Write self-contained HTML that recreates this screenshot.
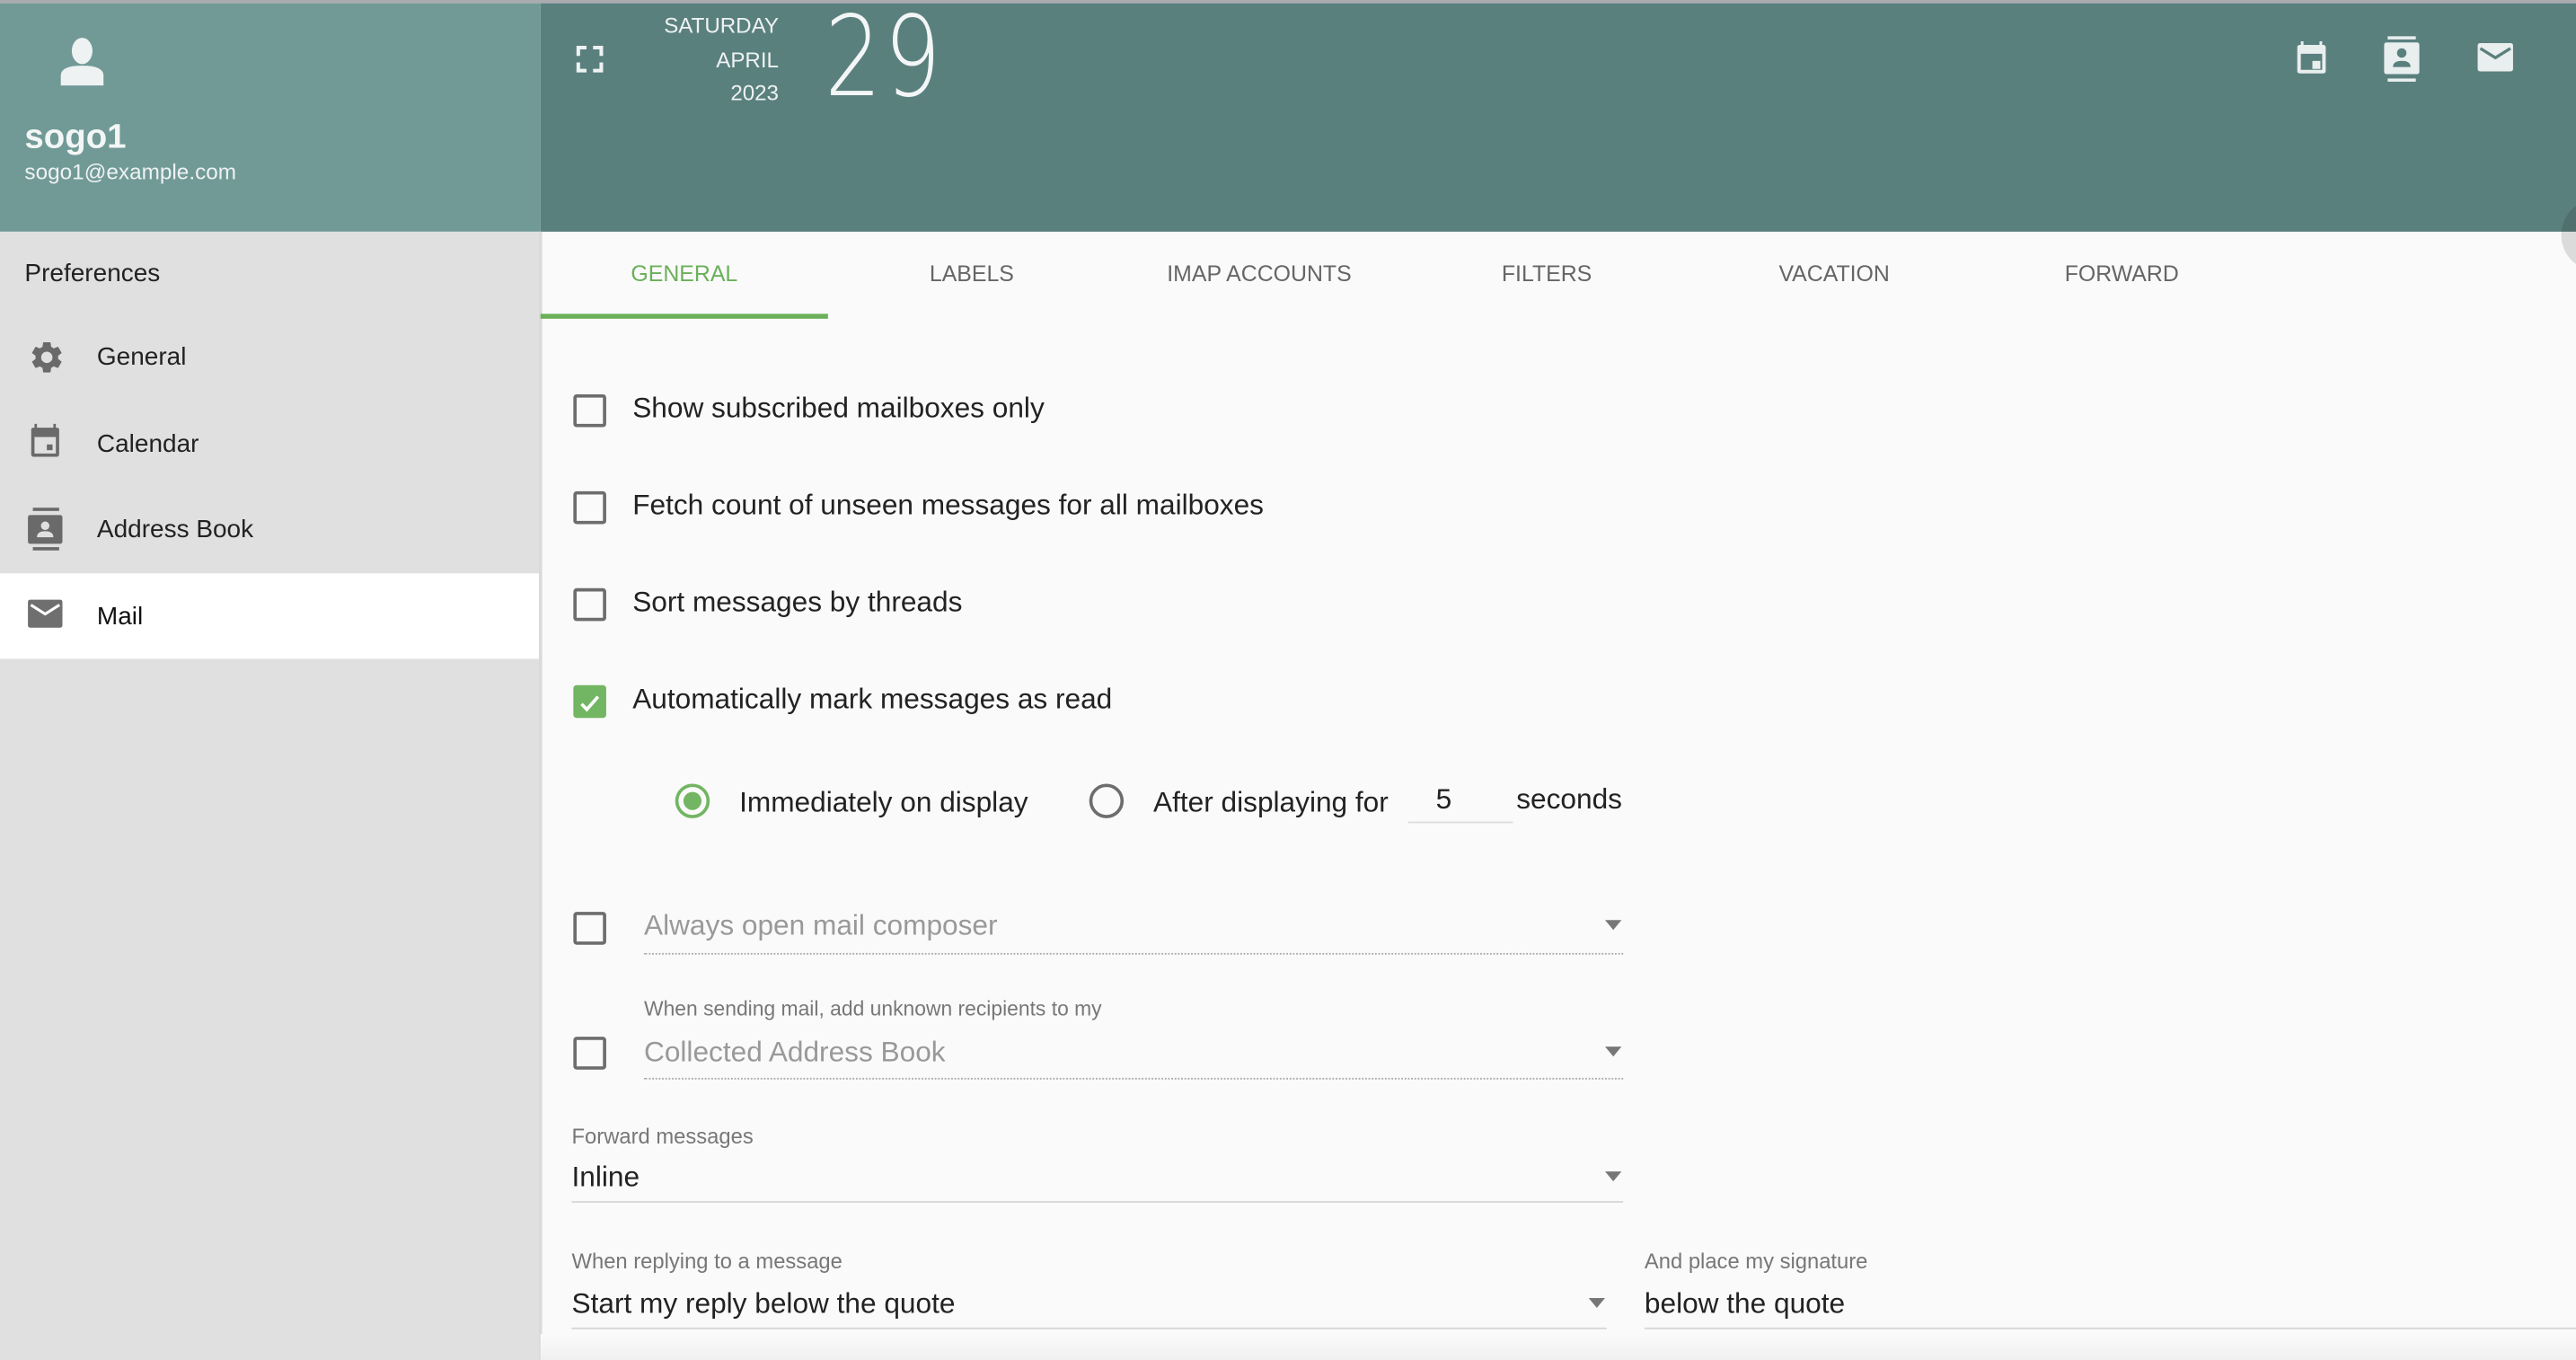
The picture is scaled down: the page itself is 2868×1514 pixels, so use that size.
<!DOCTYPE html>
<html><head><meta charset="utf-8"><style>
html,body{margin:0;padding:0;width:2868px;height:1514px;overflow:hidden;background:#fafafa}
#w{position:absolute;left:0;top:0;width:1568px;height:828px;transform:scale(1.829082);transform-origin:0 0;font-family:"Liberation Sans",sans-serif;overflow:hidden;background:#fafafa}
.a{position:absolute;white-space:nowrap}
.cb{position:absolute;width:16px;height:16px;border:2px solid #6d6d6d;border-radius:2px;left:349px}
.lbl{font-size:17.3px;color:#222}
.sm{font-size:13px;color:#777}
.tab{position:absolute;top:141px;width:175px;height:52px;line-height:52px;text-align:center;font-size:13.6px;color:#666}
.arrow{position:absolute;width:0;height:0;border-left:5.5px solid transparent;border-right:5.5px solid transparent;border-top:6px solid #777}
</style></head><body><div id="w">
<div class="a" style="left:0;top:0;width:1568px;height:1.5px;background:#a9abae"></div>
<div class="a" style="left:0;top:1.5px;width:329px;height:139.5px;background:#719a97"></div>
<div class="a" style="left:329px;top:1.5px;width:1239px;height:139.5px;background:#5a807e"></div>
<div class="a" style="left:0;top:141px;width:329px;height:687px;background:#e0e0e0"></div>
<div class="a" style="left:328px;top:141px;width:2px;height:687px;background:#dadada"></div>
<div class="a" style="left:1559px;top:121px;width:44px;height:44px;border-radius:50%;background:rgba(0,0,0,0.12)"></div>
<svg class="a" style="left:34px;top:20px" width="32" height="32" viewBox="0 0 32 32"><ellipse cx="16" cy="11" rx="6.3" ry="8" fill="#eef2f2"/><path d="M3 33 V26 Q3 20 16 20 Q29 20 29 26 V33Z" fill="#eef2f2"/></svg>
<div class="a" style="left:15px;top:72px;font-size:21px;font-weight:bold;color:#f3f6f6">sogo1</div>
<div class="a" style="left:15px;top:97px;font-size:13.3px;color:#eef2f2">sogo1@example.com</div>
<svg class="a" style="left:350px;top:27px" width="18" height="18" viewBox="0 0 18 18" fill="none" stroke="#eef2f2" stroke-width="2.2"><path d="M2 7V2H7M11 2H16V7M16 11V16H11M7 16H2V11"/></svg>
<div class="a" style="left:380px;top:6px;width:94px;text-align:right;font-size:13.2px;line-height:20.5px;color:#eef2f2">SATURDAY<br>APRIL<br>2023</div>
<div class="a" style="left:502px;top:-4px;font-size:68px;color:#f3f6f6;letter-spacing:2px;font-family:'DejaVu Sans','Liberation Sans',sans-serif;transform:scaleX(0.8);transform-origin:0 0;font-weight:200">29</div>
<svg class="a" style="left:1394px;top:23px" width="26" height="26" viewBox="0 0 24 24" fill="#e9eeee"><path d="M6 2h1.5v3H6zM16.5 2H18v3h-1.5zM4 5.5Q4 4 5.5 4h13Q20 4 20 5.5v13Q20 20 18.5 20h-13Q4 20 4 18.5zM6 9v9h12V9z"/><rect x="12.5" y="13" width="4.5" height="4.5"/></svg>
<svg class="a" style="left:1449px;top:21px" width="28" height="30" viewBox="0 0 26 28" fill="#e9eeee"><rect x="4" y="1" width="16" height="1.8"/><rect x="4" y="25" width="16" height="1.8"/><path d="M2 6Q2 4.5 3.5 4.5h17Q22 4.5 22 6v15Q22 22.5 20.5 22.5h-17Q2 22.5 2 21z"/><circle cx="12" cy="10.5" r="2.7" fill="#5a807e"/><path d="M7 18.5q0-3.5 5-3.5t5 3.5z" fill="#5a807e"/></svg>
<svg class="a" style="left:1506px;top:24px" width="28" height="26" viewBox="0 0 26 24" fill="#e9eeee"><path d="M2 3.5Q2 2 3.5 2h17Q22 2 22 3.5v13Q22 18 20.5 18h-17Q2 18 2 16.5z"/><path d="M3.5 5l8.5 5.3 8.5-5.3" stroke="#5a807e" stroke-width="1.7" fill="none"/></svg>
<div class="a" style="left:15px;top:158px;font-size:15.3px;color:#222">Preferences</div>
<div class="a" style="left:0;top:349px;width:328px;height:52px;background:#fff"></div>
<svg class="a" style="left:17px;top:206px" width="23" height="23" viewBox="0 0 24 24" fill="#6a6a6a"><path d="M19.14 12.94c.04-.3.06-.61.06-.94 0-.32-.02-.64-.07-.94l2.03-1.58a.49.49 0 0 0 .12-.61l-1.92-3.320a.49.49 0 0 0-.59-.22l-2.39.96c-.5-.38-1.03-.7-1.62-.94l-.36-2.54a.48.48 0 0 0-.48-.41h-3.84a.48.48 0 0 0-.47.41l-.36 2.54c-.59.24-1.13.57-1.62.94l-2.39-.96a.48.48 0 0 0-.59.22L2.74 8.87a.47.47 0 0 0 .12.61l2.03 1.58c-.05.3-.09.63-.09.94s.02.64.07.94l-2.03 1.58a.49.49 0 0 0-.12.61l1.92 3.32c.12.22.37.29.59.22l2.39-.96c.5.38 1.03.7 1.62.94l.36 2.54c.05.24.24.41.48.41h3.84c.24 0 .44-.17.47-.41l.36-2.54c.59-.24 1.13-.56 1.62-.94l2.39.96c.22.08.47 0 .59-.22l1.92-3.32c.12-.22.07-.47-.12-.61l-2.01-1.580zM12 15.6A3.6 3.6 0 1 1 12 8.4a3.6 3.6 0 0 1 0 7.2z"/></svg>
<div class="a" style="left:59px;top:209px;font-size:15.3px;color:#222">General</div>
<svg class="a" style="left:16px;top:256px" width="24" height="26" viewBox="0 0 24 26" fill="#6a6a6a"><path d="M5 2h1.5v3H5zM16.5 2H18v3h-1.5zM3 5.5Q3 4.3 4.5 4.3h14Q20 4.3 20 5.5v15Q20 22 18.5 22h-14Q3 22 3 20.5zM5 10v10h13V10z"/><rect x="12.5" y="14.5" width="3.5" height="3.5"/></svg>
<div class="a" style="left:59px;top:262px;font-size:15.3px;color:#222">Calendar</div>
<svg class="a" style="left:16px;top:307px" width="26" height="30" viewBox="0 0 26 30" fill="#6a6a6a"><rect x="4" y="2" width="16" height="2"/><rect x="4" y="26" width="16" height="2"/><path d="M1 8Q1 6.5 2.5 6.5h18Q22 6.5 22 8v14.5Q22 24 20.5 24h-18Q1 24 1 22.5z"/><circle cx="11.5" cy="13" r="2.6" fill="#e0e0e0"/><path d="M6.5 20q0-3.7 5-3.7t5 3.7z" fill="#e0e0e0"/></svg>
<div class="a" style="left:59px;top:314px;font-size:15.3px;color:#222">Address Book</div>
<svg class="a" style="left:16px;top:364px" width="26" height="22" viewBox="0 0 26 22" fill="#6f6f6f"><path d="M1 2.5Q1 1 2.5 1h18Q22 1 22 2.5v14Q22 18 20.5 18h-18Q1 18 1 16.5z"/><path d="M2.8 4.2l8.7 5.5 8.7-5.5" stroke="#fff" stroke-width="1.7" fill="none"/></svg>
<div class="a" style="left:59px;top:367px;font-size:15.3px;color:#111">Mail</div>
<div class="tab" style="left:329px;color:#6bb05a">GENERAL</div>
<div class="tab" style="left:504px">LABELS</div>
<div class="tab" style="left:679px">IMAP ACCOUNTS</div>
<div class="tab" style="left:854px">FILTERS</div>
<div class="tab" style="left:1029px">VACATION</div>
<div class="tab" style="left:1204px">FORWARD</div>
<div class="a" style="left:329px;top:191px;width:175px;height:2.5px;background:#6bb05a"></div>
<div class="cb" style="top:240px"></div><div class="a lbl" style="left:385px;top:238px">Show subscribed mailboxes only</div>
<div class="cb" style="top:299px"></div><div class="a lbl" style="left:385px;top:297px">Fetch count of unseen messages for all mailboxes</div>
<div class="cb" style="top:358px"></div><div class="a lbl" style="left:385px;top:356px">Sort messages by threads</div>
<div class="cb" style="top:417px;background:#72b562;border-color:#72b562"></div>
<svg class="a" style="left:351px;top:420px" width="16" height="16" viewBox="0 0 16 16"><path d="M3 8.5l3.2 3.3L13 4" stroke="#fff" stroke-width="2" fill="none"/></svg>
<div class="a lbl" style="left:385px;top:415px">Automatically mark messages as read</div>
<div class="a" style="left:411px;top:477px;width:17px;height:17px;border:2px solid #72b562;border-radius:50%"></div>
<div class="a" style="left:416px;top:482px;width:11px;height:11px;background:#72b562;border-radius:50%"></div>
<div class="a lbl" style="left:450px;top:478px">Immediately on display</div>
<div class="a" style="left:663px;top:477px;width:17px;height:17px;border:2px solid #6d6d6d;border-radius:50%"></div>
<div class="a lbl" style="left:702px;top:478px">After displaying for</div>
<div class="a lbl" style="left:874px;top:476px">5</div>
<div class="a" style="left:857px;top:500px;width:64px;height:1px;background:#ddd"></div>
<div class="a lbl" style="left:923px;top:476px">seconds</div>
<div class="cb" style="top:555px"></div>
<div class="a lbl" style="left:392px;top:553px;color:#999">Always open mail composer</div>
<div class="arrow" style="left:977px;top:560px"></div>
<div class="a" style="left:392px;top:580px;width:596px;border-top:1px dotted #aaa"></div>
<div class="a sm" style="left:392px;top:607px;font-size:12.5px;color:#777">When sending mail, add unknown recipients to my</div>
<div class="cb" style="top:631px"></div>
<div class="a lbl" style="left:392px;top:630px;color:#999">Collected Address Book</div>
<div class="arrow" style="left:977px;top:637px"></div>
<div class="a" style="left:392px;top:656px;width:596px;border-top:1px dotted #aaa"></div>
<div class="a sm" style="left:348px;top:684px">Forward messages</div>
<div class="a lbl" style="left:348px;top:706px">Inline</div>
<div class="arrow" style="left:977px;top:713px"></div>
<div class="a" style="left:348px;top:731px;width:640px;height:1px;background:#d6d6d6"></div>
<div class="a sm" style="left:348px;top:760px">When replying to a message</div>
<div class="a lbl" style="left:348px;top:783px">Start my reply below the quote</div>
<div class="arrow" style="left:967px;top:790px"></div>
<div class="a" style="left:348px;top:808px;width:630px;height:1px;background:#d6d6d6"></div>
<div class="a sm" style="left:1001px;top:760px">And place my signature</div>
<div class="a lbl" style="left:1001px;top:783px">below the quote</div>
<div class="a" style="left:1001px;top:808px;width:567px;height:1px;background:#d6d6d6"></div>
<div class="a" style="left:329px;top:812px;width:1239px;height:16px;background:linear-gradient(#fafafa,#f0f0f0)"></div>
</div></body></html>
